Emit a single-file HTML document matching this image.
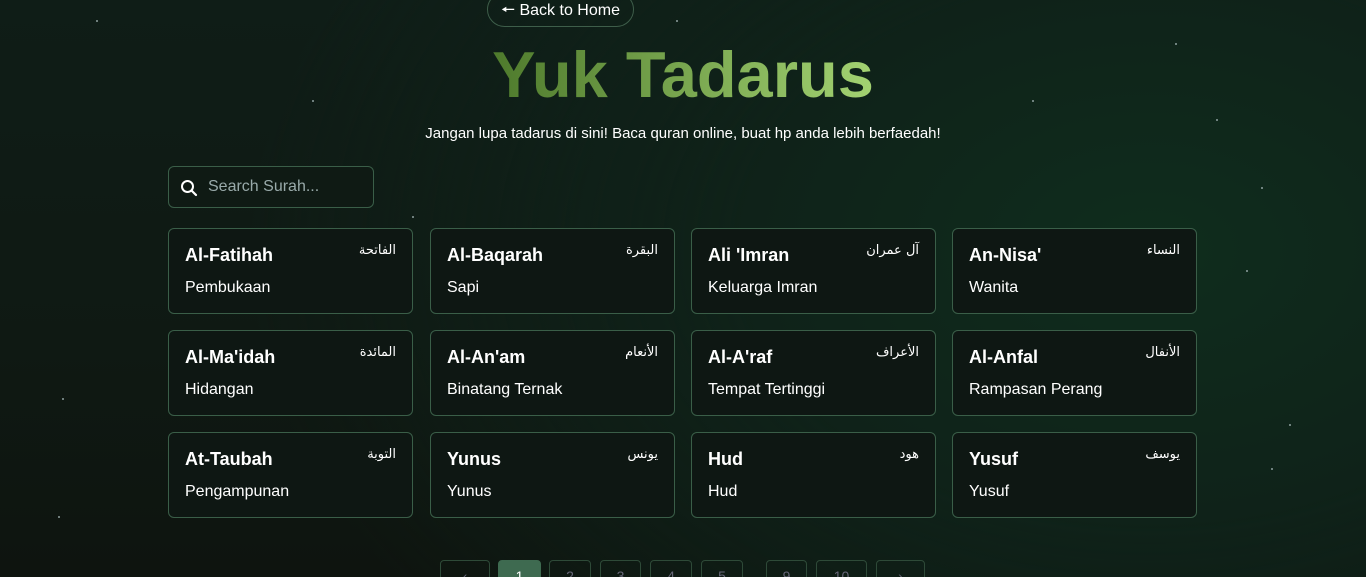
<!DOCTYPE html>
<html style="width:1366px;height:577px;overflow:hidden"><head><meta charset="utf-8"><style>
*{box-sizing:border-box;margin:0;padding:0}
body{width:1366px;height:577px;overflow:hidden;font-family:"Liberation Sans",sans-serif;color:#fff;
background:radial-gradient(ellipse 900px 600px at 1150px 250px,#0f2d1d 0%,#0f2219 45%,rgba(15,26,20,0) 100%),linear-gradient(180deg,#0f1d17 0%,#0f1913 60%,#0e140f 100%);position:relative}
.star{position:absolute;width:2px;height:2px;background:#9aa;opacity:.7}
.back{position:absolute;left:487px;top:-8px;width:147px;height:35px;border:1px solid #3e5e4a;border-radius:18px;font-size:16px;line-height:34px;text-align:center;padding-top:1px}
h1{position:absolute;left:0;width:1366px;top:37px;text-align:center;font-size:65px;font-weight:bold;}
h1 span{background:linear-gradient(90deg,#4e7a2c,#a3d272);-webkit-background-clip:text;background-clip:text;color:transparent}
.sub{position:absolute;left:0;width:1366px;top:125px;text-align:center;font-size:15px}
.search{position:absolute;left:168px;top:166px;width:206px;height:42px;border:1px solid #3a5e48;border-radius:6px;background:#0f1a14}
.search span{position:absolute;left:39px;top:11px;font-size:16px;color:#9aa}
.card{position:absolute;width:245px;height:86px;border:1px solid #3a5e48;border-radius:6px;background:#0e1713}
.card b{position:absolute;left:16px;top:16px;font-size:18px}
.card .ar{position:absolute;right:16px;top:14px;font-size:13px;font-family:"DejaVu Sans",sans-serif}
.card .tr{position:absolute;left:16px;top:50px;font-size:16px}
.pg{position:absolute;top:560px;height:30px;border:1px solid #2e4a38;border-radius:4px;color:#667;font-size:14px;text-align:center;line-height:30px}
.pg.a{background:#3e6a50;border-color:#3e6a50;color:#fff}
</style></head><body>
<div class="star" style="left:96px;top:20px"></div><div class="star" style="left:676px;top:20px"></div><div class="star" style="left:1175px;top:43px"></div><div class="star" style="left:1032px;top:100px"></div><div class="star" style="left:1216px;top:119px"></div><div class="star" style="left:1261px;top:187px"></div><div class="star" style="left:412px;top:216px"></div><div class="star" style="left:312px;top:100px"></div><div class="star" style="left:1246px;top:270px"></div><div class="star" style="left:1289px;top:424px"></div><div class="star" style="left:62px;top:398px"></div><div class="star" style="left:58px;top:516px"></div><div class="star" style="left:1271px;top:468px"></div><div class="star" style="left:623px;top:262px"></div><div class="star" style="left:1076px;top:302px"></div><div class="star" style="left:565px;top:470px"></div>
<div class="back">🠔 Back to Home</div>
<h1><span>Yuk Tadarus</span></h1>
<div class="sub">Jangan lupa tadarus di sini! Baca quran online, buat hp anda lebih berfaedah!</div>
<div class="search"><svg style="position:absolute;left:11px;top:12px" width="18" height="18" viewBox="0 0 18 18"><circle cx="7.5" cy="7.5" r="5.5" fill="none" stroke="#fff" stroke-width="2"/><path d="M11.5 11.5L16 16" stroke="#fff" stroke-width="2.2" stroke-linecap="round"/></svg><span>Search Surah...</span></div>

<div class="card" style="left:168px;top:228px"><b>Al-Fatihah</b><span class="ar">الفاتحة</span><span class="tr">Pembukaan</span></div>
<div class="card" style="left:430px;top:228px"><b>Al-Baqarah</b><span class="ar">البقرة</span><span class="tr">Sapi</span></div>
<div class="card" style="left:691px;top:228px"><b>Ali 'Imran</b><span class="ar">آل عمران</span><span class="tr">Keluarga Imran</span></div>
<div class="card" style="left:952px;top:228px"><b>An-Nisa'</b><span class="ar">النساء</span><span class="tr">Wanita</span></div>
<div class="card" style="left:168px;top:330px"><b>Al-Ma'idah</b><span class="ar">المائدة</span><span class="tr">Hidangan</span></div>
<div class="card" style="left:430px;top:330px"><b>Al-An'am</b><span class="ar">الأنعام</span><span class="tr">Binatang Ternak</span></div>
<div class="card" style="left:691px;top:330px"><b>Al-A'raf</b><span class="ar">الأعراف</span><span class="tr">Tempat Tertinggi</span></div>
<div class="card" style="left:952px;top:330px"><b>Al-Anfal</b><span class="ar">الأنفال</span><span class="tr">Rampasan Perang</span></div>
<div class="card" style="left:168px;top:432px"><b>At-Taubah</b><span class="ar">التوبة</span><span class="tr">Pengampunan</span></div>
<div class="card" style="left:430px;top:432px"><b>Yunus</b><span class="ar">يونس</span><span class="tr">Yunus</span></div>
<div class="card" style="left:691px;top:432px"><b>Hud</b><span class="ar">هود</span><span class="tr">Hud</span></div>
<div class="card" style="left:952px;top:432px"><b>Yusuf</b><span class="ar">يوسف</span><span class="tr">Yusuf</span></div>

<div class="pg" style="left:440px;width:50px">‹</div>
<div class="pg a" style="left:498px;width:43px">1</div>
<div class="pg" style="left:549px;width:42px">2</div>
<div class="pg" style="left:600px;width:41px">3</div>
<div class="pg" style="left:650px;width:42px">4</div>
<div class="pg" style="left:701px;width:42px">5</div>
<div class="pg" style="left:766px;width:41px">9</div>
<div class="pg" style="left:816px;width:51px">10</div>
<div class="pg" style="left:876px;width:49px">›</div>
</body></html>
